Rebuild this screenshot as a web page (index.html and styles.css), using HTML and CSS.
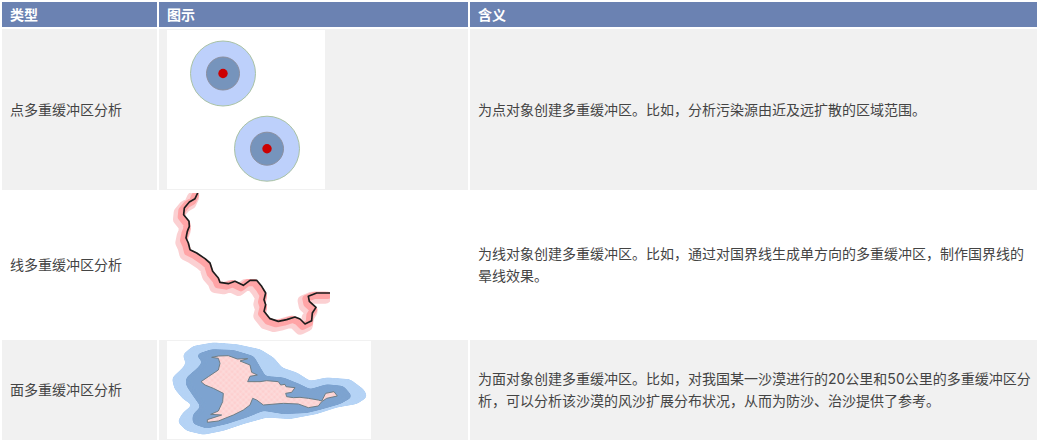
FILE: index.html
```html
<!DOCTYPE html>
<html>
<head>
    <title>多重缓冲区分析</title>
    <meta charset="utf-8">
    <link rel="stylesheet" href="styles.css">
</head>
<body>
<table class="buffer-table">
    <colgroup>
        <col class="col-type">
        <col class="col-figure">
        <col class="col-meaning">
    </colgroup>
    <thead>
    <tr>
        <th>类型</th>
        <th>图示</th>
        <th>含义</th>
    </tr>
    </thead>
    <tbody>
    <tr>
        <td>点多重缓冲区分析</td>
        <td class="figure-cell">
            <svg class="figure figure-point" viewBox="167 30 158 159">
                <rect x="167" y="30" width="158" height="159" fill="#fff"/>
                <circle cx="223" cy="73.5" r="32.5" fill="#bdd0fb" stroke="#a9c2a4" stroke-width="1"/>
                <circle cx="223" cy="73.5" r="16.5" fill="#7694bc" stroke="#8b8f9f" stroke-width="1"/>
                <circle cx="223" cy="73.5" r="4.7" fill="#cc0000"/>
                <circle cx="267" cy="148.7" r="32.5" fill="#bdd0fb" stroke="#a9c2a4" stroke-width="1"/>
                <circle cx="267" cy="148.7" r="16.5" fill="#7694bc" stroke="#8b8f9f" stroke-width="1"/>
                <circle cx="267" cy="148.7" r="4.7" fill="#cc0000"/>
            </svg>
        </td>
        <td>为点对象创建多重缓冲区。比如，分析污染源由近及远扩散的区域范围。</td>
    </tr>
    <tr class="row-plain">
        <td>线多重缓冲区分析</td>
        <td class="figure-cell">
            <svg class="figure figure-line" viewBox="51 15 489 432">
                <defs>
                    <path id="border-line" d="M143 15L135 32L118 42L103 60L101 80L117 100L118 115L112 130L108 150L115 165L120 185L140 195L165 212L180 225L188 250L205 270L210 283L235 287L255 280L280 292L300 277L320 277L335 295L347 315L342 335L347 350L342 370L360 392L385 400L410 395L435 387L450 393L465 408L485 398L487 375L498 358L478 340L475 325L500 315L540 315"/>
                    <clipPath id="line-clip"><rect x="51" y="15" width="489" height="432"/></clipPath>
                    <filter id="band-soft"><feGaussianBlur stdDeviation="1.5"/></filter>
                    <filter id="line-soft"><feGaussianBlur stdDeviation="0.8"/></filter>
                </defs>
                <g clip-path="url(#line-clip)">
                    <g fill="none" stroke-linejoin="round" stroke-linecap="round">
                        <use href="#border-line" transform="translate(-14 14)" stroke="#fbd0d2" stroke-width="36" filter="url(#band-soft)"/>
                        <use href="#border-line" transform="translate(-7 7)" stroke="#ffa4a6" stroke-width="22" filter="url(#band-soft)"/>
                        <use href="#border-line" stroke="#1c1c1c" stroke-width="5" filter="url(#line-soft)"/>
                    </g>
                </g>
            </svg>
        </td>
        <td>为线对象创建多重缓冲区。比如，通过对国界线生成单方向的多重缓冲区，制作国界线的晕线效果。</td>
    </tr>
    <tr>
        <td>面多重缓冲区分析</td>
        <td class="figure-cell">
            <svg class="figure figure-area" viewBox="51 18 612 294">
                <defs>
                    <pattern id="sand" width="12" height="12" patternUnits="userSpaceOnUse" patternTransform="rotate(45)">
                        <rect width="12" height="12" fill="#fdcfcf"/>
                        <path d="M0 6H12M6 0V12" stroke="#fbe2e2" stroke-width="2"/>
                    </pattern>
                    <filter id="blob" color-interpolation-filters="sRGB">
                        <feGaussianBlur stdDeviation="7"/>
                        <feComponentTransfer><feFuncA type="linear" slope="10" intercept="-3"/></feComponentTransfer>
                    </filter>
                    <filter id="area-soft"><feGaussianBlur stdDeviation="0.8"/></filter>
                </defs>
                <rect x="51" y="18" width="612" height="294" fill="#fff"/>
                <path filter="url(#blob)" fill="#b5d3f5" d="M100 60L130 35L190 25L260 30L330 45L370 70L395 100L440 115L480 140L530 130L600 135L640 165L650 185L620 205L560 215L500 235L420 250L350 245L280 265L220 285L160 297L110 285L85 260L100 235L130 210L100 190L75 160L68 130L100 100L110 85Z"/>
                <path filter="url(#blob)" fill="#7da3d0" d="M140 60L185 45L250 47L310 65L330 100L345 125L400 130L450 150L480 165L530 150L580 155L605 185L570 205L510 222L470 232L400 235L340 225L290 245L230 265L170 278L130 265L130 240L155 215L130 180L110 150L110 130L145 100L160 80Z"/>
                <path filter="url(#area-soft)" fill="url(#sand)" stroke="#6d7d85" stroke-width="3" stroke-linejoin="round" d="M185 67L205 63L235 62L262 72L293 71L270 78L300 90L305 112L322 120L300 124L293 140L330 140L350 137L385 140L392 150L405 148L408 155L435 158L425 172L407 175L410 185L430 188L450 187L475 190L505 195L515 198L527 175L552 170L562 183L530 190L515 200L505 213L475 218L445 207L400 205L340 210L320 195L308 190L300 210L280 225L250 240L205 258L172 262L172 254L215 240L182 238L205 228L218 200L220 175L190 160L165 150L153 140L175 125L205 105L210 85L205 70Z"/>
            </svg>
        </td>
        <td>为面对象创建多重缓冲区。比如，对我国某一沙漠进行的20公里和50公里的多重缓冲区分析，可以分析该沙漠的风沙扩展分布状况，从而为防沙、治沙提供了参考。</td>
    </tr>
    </tbody>
</table>
</body>
</html>
```

FILE: styles.css
```css
body {
    margin: 0;
    background-color: #fff;
    font-family: Inter, "Noto Sans CJK SC", sans-serif;
    font-size: 14px;
    line-height: 22px;
    color: #444;
}

.buffer-table {
    width: 1039px;
    table-layout: fixed;
    border-collapse: separate;
    border-spacing: 2px;
}

.col-type {
    width: 155px;
}

.col-figure {
    width: 309px;
}

th {
    height: 25px;
    padding: 0 8px;
    text-align: left;
    font-weight: bold;
    color: #fff;
    background-color: #6b82b2;
}

td {
    padding: 1px 4px 1px 8px;
    background-color: #f1f1f1;
}

.row-plain td {
    background-color: #fff;
}

.figure {
    display: block;
}

.figure-point {
    width: 158px;
    height: 159px;
}

.figure-line {
    width: 163px;
    height: 144px;
}

.figure-area {
    width: 204px;
    height: 98px;
}
```
